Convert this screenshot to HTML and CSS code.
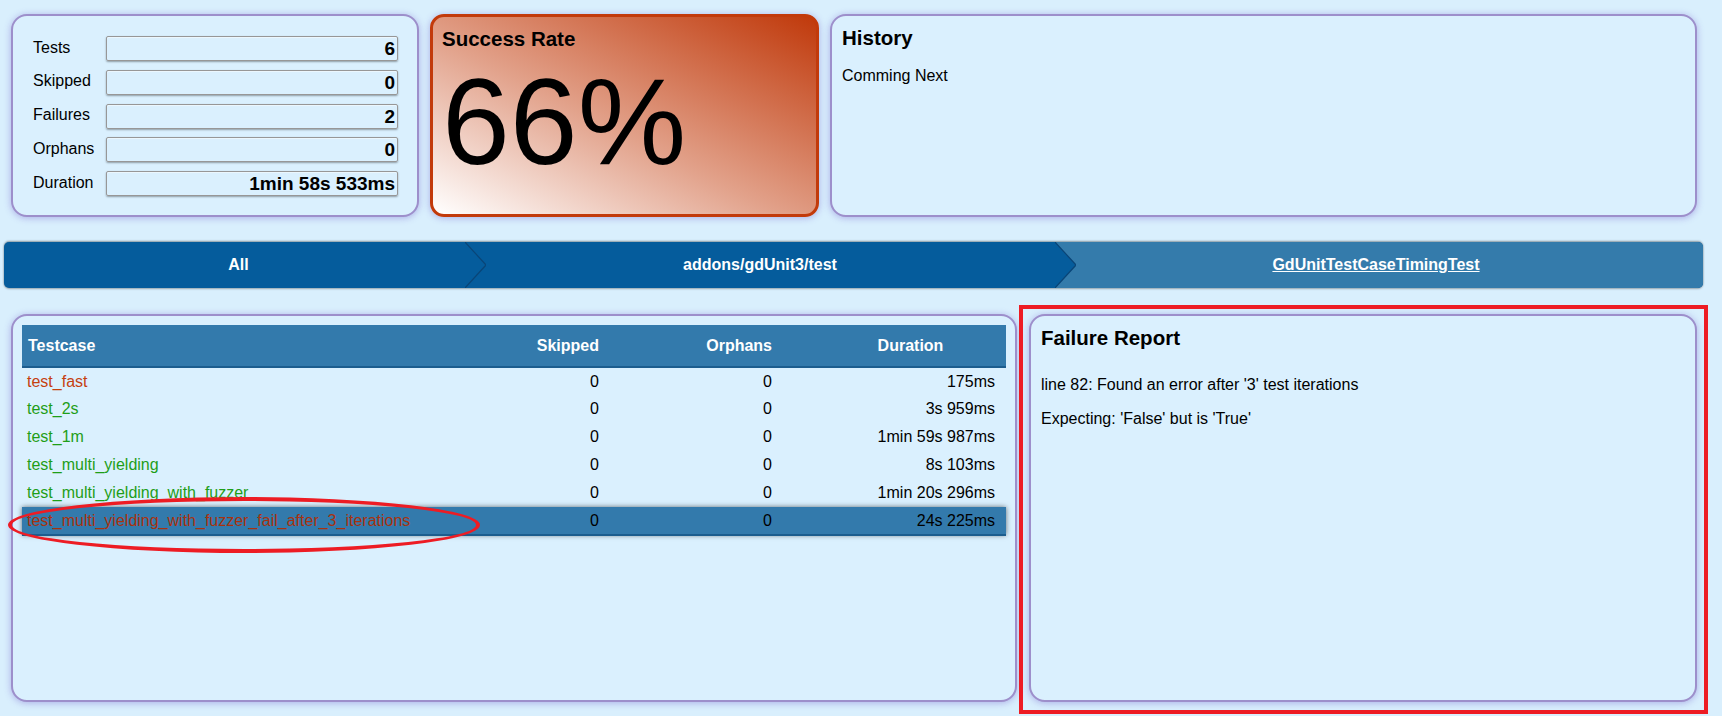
FILE: index.html
```html
<!DOCTYPE html>
<html>
<head>
<meta charset="utf-8">
<title>GdUnit Report</title>
<link rel="stylesheet" href="styles.css">
</head>
<body>
<div class="top">
  <section class="card stats">
    <div class="stat"><span class="stat-label">Tests</span><span class="stat-value">6</span></div>
    <div class="stat"><span class="stat-label">Skipped</span><span class="stat-value">0</span></div>
    <div class="stat"><span class="stat-label">Failures</span><span class="stat-value">2</span></div>
    <div class="stat"><span class="stat-label">Orphans</span><span class="stat-value">0</span></div>
    <div class="stat"><span class="stat-label">Duration</span><span class="stat-value">1min 58s 533ms</span></div>
  </section>
  <section class="card success">
    <h3 class="title">Success Rate</h3>
    <div class="rate">66%</div>
  </section>
  <section class="card history">
    <h3 class="title">History</h3>
    <p class="history-text">Comming Next</p>
  </section>
</div>

<nav class="crumbs">
  <div class="crumb crumb-first">All</div>
  <svg class="sep" width="21" height="46" viewBox="0 0 21 46"><rect width="21" height="46" fill="#055c9c"/><polyline points="0,0 21,23 0,46" fill="none" stroke="#0a4577" stroke-width="1.2"/></svg>
  <div class="crumb crumb-mid">addons/gdUnit3/test</div>
  <svg class="sep" width="21" height="46" viewBox="0 0 21 46"><rect width="21" height="46" fill="#347bab"/><polygon points="0,0 21,23 0,46" fill="#055c9c"/><polyline points="0,0 21,23 0,46" fill="none" stroke="#0a4577" stroke-width="1.2"/></svg>
  <div class="crumb crumb-last"><a href="#">GdUnitTestCaseTimingTest</a></div>
</nav>

<div class="bottom">
  <section class="card cases">
    <table class="grid">
      <thead>
        <tr><th class="c-name">Testcase</th><th class="c-num">Skipped</th><th class="c-num">Orphans</th><th class="c-dur-h">Duration</th></tr>
      </thead>
      <tbody>
        <tr><td class="c-name fail">test_fast</td><td class="c-num">0</td><td class="c-num">0</td><td class="c-dur">175ms</td></tr>
        <tr><td class="c-name pass">test_2s</td><td class="c-num">0</td><td class="c-num">0</td><td class="c-dur">3s 959ms</td></tr>
        <tr><td class="c-name pass">test_1m</td><td class="c-num">0</td><td class="c-num">0</td><td class="c-dur">1min 59s 987ms</td></tr>
        <tr><td class="c-name pass">test_multi_yielding</td><td class="c-num">0</td><td class="c-num">0</td><td class="c-dur">8s 103ms</td></tr>
        <tr><td class="c-name pass">test_multi_yielding_with_fuzzer</td><td class="c-num">0</td><td class="c-num">0</td><td class="c-dur">1min 20s 296ms</td></tr>
        <tr class="selected"><td class="c-name fail-sel">test_multi_yielding_with_fuzzer_fail_after_3_iterations</td><td class="c-num">0</td><td class="c-num">0</td><td class="c-dur">24s 225ms</td></tr>
      </tbody>
    </table>
  </section>
  <section class="card report">
    <h3 class="title">Failure Report</h3>
    <p class="report-line">line 82: Found an error after '3' test iterations</p>
    <p class="report-line">Expecting: 'False' but is 'True'</p>
  </section>
</div>

<div class="mark-ellipse"></div>
<div class="mark-rect"></div>
</body>
</html>
```
FILE: styles.css
```css
* { box-sizing: border-box; }

body {
  margin: 0;
  width: 1722px;
  height: 716px;
  overflow: hidden;
  position: relative;
  background: #d9effd;
  font-family: "Liberation Sans", Arial, sans-serif;
  font-size: 16px;
  color: #000;
}

.top {
  display: flex;
  gap: 11px;
  padding: 14px 0 0 11px;
}

.card {
  background: #daf0fe;
  border: 2px solid #9d8fcb;
  border-radius: 16px;
  box-shadow: 0 1px 7px rgba(115, 95, 205, 0.45);
}

.stats {
  width: 408px;
  height: 203px;
  padding: 20px 19px 0 20px;
  display: flex;
  flex-direction: column;
  gap: 8.75px;
}

.stat {
  display: flex;
  align-items: center;
  height: 25px;
}

.stat-label {
  width: 73px;
  font-size: 16px;
  position: relative;
  top: -1px;
}

.stat-value {
  flex: 1;
  height: 25px;
  border: 1px solid #979797;
  border-radius: 2px;
  box-shadow: 0 1px 2px rgba(0, 0, 0, 0.35), inset 0 1px 1px rgba(255,255,255,0.5);
  text-align: right;
  font-weight: bold;
  font-size: 19px;
  line-height: 23px;
  padding-right: 2px;
}

.success {
  width: 389px;
  height: 203px;
  border: 3px solid #c23a0b;
  border-radius: 14px;
  background: linear-gradient(to top right, #ffffff 0%, #e2a28b 45%, #c0390b 100%);
  padding: 10px 9px 0 9px;
}

.title {
  margin: 0;
  font-size: 20.5px;
  font-weight: bold;
  line-height: 23.5px;
}

.rate {
  font-size: 122px;
  line-height: 140px;
  margin-top: 1px;
}

.history {
  width: 867px;
  height: 203px;
  padding: 10px 10px 0 10px;
}

.history-text {
  margin: 17px 0 0 0;
  line-height: 18.4px;
}

.crumbs {
  display: flex;
  margin: 25px 0 0 4px;
  width: 1699px;
  height: 46px;
  border-radius: 5px;
  overflow: hidden;
  background: #055c9c;
  box-shadow: 0 -1px 2px rgba(0, 0, 0, 0.35), 0 1px 2px rgba(0, 0, 0, 0.3);
  color: #fff;
  font-weight: bold;
  font-size: 16px;
}

.crumb {
  display: flex;
  align-items: center;
  justify-content: center;
  height: 46px;
}

.crumb-first {
  width: 461px;
  padding-left: 8px;
}

.sep { display: block; flex: none; }

.crumb-mid {
  width: 569px;
  padding-right: 21px;
}

.crumb-last {
  flex: 1;
  background: #347bab;
  padding-right: 27px;
}

.crumb-last a {
  color: #fff;
  text-decoration: underline;
}

.bottom {
  display: flex;
  gap: 12px;
  padding: 26px 0 0 11px;
}

.cases {
  width: 1006px;
  height: 388px;
  padding: 9px;
}

.grid {
  width: 984px;
  border-collapse: collapse;
  table-layout: fixed;
}

.grid th {
  background: #337aac;
  color: #fff;
  font-weight: bold;
  height: 42px;
  border-bottom: 2px solid #1c5d8e;
  padding: 0 8px;
}

.grid td {
  height: 28px;
  padding: 0 8px;
}

.c-name { width: 458px; text-align: left; }
.grid th.c-name { padding-left: 6px; }
.grid td.c-name { padding-left: 5px; white-space: nowrap; }
.c-num { width: 150px; text-align: right; }
.grid th:nth-child(2), .grid td:nth-child(2) { width: 127px; }
.grid th:nth-child(3), .grid td:nth-child(3) { width: 173px; }
.grid th.c-dur-h { width: 226px; text-align: center; padding: 0 0 0 35px; }
.grid td.c-dur { text-align: right; padding-right: 11px; }

.fail { color: #c5400f; }
.pass { color: #1f9e18; }

.grid tr.selected td {
  background: #337aac;
  border-bottom: 2px solid #1c5d8e;
}
.grid tr.selected {
  box-shadow: 0 0 5px rgba(0, 0, 0, 0.55);
}
.fail-sel { color: #a8320e; }

.report {
  width: 668px;
  height: 388px;
  padding: 10px 10px 0 10px;
}

.report .title { margin-bottom: 26px; }

.report-line {
  margin: 16px 0;
  line-height: 18.4px;
}

.mark-ellipse {
  position: absolute;
  left: 8px;
  top: 497px;
  width: 472px;
  height: 56px;
  border: 4px solid #ed1c24;
  border-radius: 50%;
  pointer-events: none;
}

.mark-rect {
  position: absolute;
  left: 1019px;
  top: 305px;
  width: 689px;
  height: 409px;
  border: 4px solid #ed1c24;
  pointer-events: none;
}
```
